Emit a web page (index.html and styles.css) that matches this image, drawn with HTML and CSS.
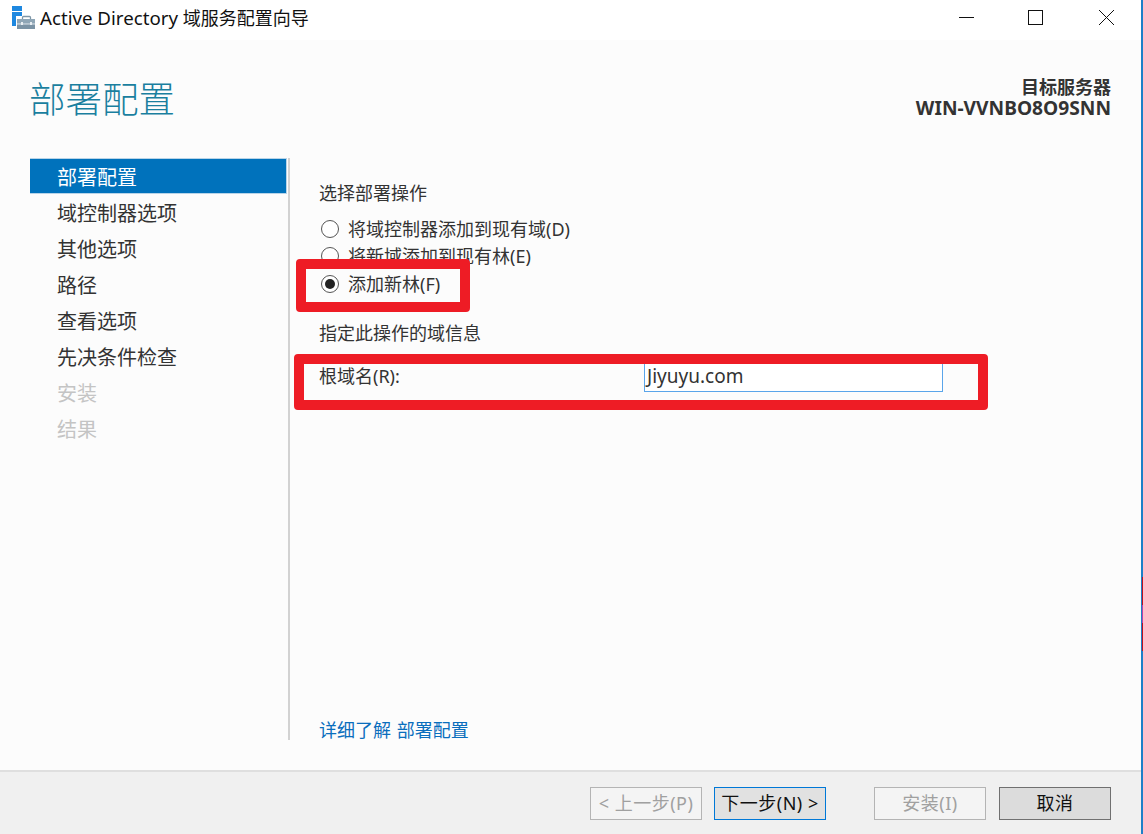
FILE: index.html
```html
<!DOCTYPE html>
<html lang="zh-CN">
<head>
<meta charset="utf-8">
<title>Active Directory 域服务配置向导</title>
<link rel="stylesheet" href="styles.css">
</head>
<body>
<div class="window">
  <header class="titlebar">
    <svg class="app-icon" width="23" height="23" viewBox="0 0 23 23">
      <rect x="0" y="0" width="10" height="5" fill="#1e88e0"/>
      <rect x="0" y="6" width="10" height="4" fill="#1e88e0"/>
      <rect x="0" y="10" width="4" height="10" fill="#1e88e0"/>
      <path d="M10.500 14v-2.500a1 1 0 0 1 1-1h6a1 1 0 0 1 1 1V14" fill="none" stroke="#7f97a8" stroke-width="1.300"/>
      <rect x="5" y="13" width="19" height="5" fill="#8fa6b6"/>
      <rect x="5" y="18" width="19" height="5" fill="#7b93a5"/>
      <rect x="5" y="17.500" width="19" height="1" fill="#dfe6eb"/>
      <rect x="9" y="16" width="2" height="3" fill="#e8eef2"/>
      <rect x="18" y="16" width="2" height="3" fill="#e8eef2"/>
    </svg>
    <span class="app-title">Active Directory <span class="cjk">域服务配置向导</span></span>
    <div class="window-controls">
      <svg width="15" height="15" viewBox="0 0 15 15"><path d="M0 7.500h15" stroke="#111" fill="none"/></svg>
      <svg class="max-icon" width="15" height="15" viewBox="0 0 15 15"><rect x=".5" y=".5" width="14" height="14" stroke="#111" fill="none"/></svg>
      <svg width="15" height="15" viewBox="0 0 15 15"><path d="M0 0l15 15M15 0L0 15" stroke="#111" fill="none"/></svg>
    </div>
  </header>

  <main class="content">
    <div class="page-head">
      <h1 class="page-title">部署配置</h1>
      <div class="server">
        <div class="server-role">目标服务器</div>
        <div class="server-name">WIN-VVNBO8O9SNN</div>
      </div>
    </div>
    <div class="panes">
      <nav class="nav">
        <div class="nav-item active">部署配置</div>
        <div class="nav-item">域控制器选项</div>
        <div class="nav-item">其他选项</div>
        <div class="nav-item">路径</div>
        <div class="nav-item">查看选项</div>
        <div class="nav-item">先决条件检查</div>
        <div class="nav-item disabled">安装</div>
        <div class="nav-item disabled">结果</div>
      </nav>
      <section class="form">
        <div class="form-main">
          <div class="label section-label">选择部署操作</div>
          <div class="radios">
            <div class="radio-row"><span class="radio"></span>将域控制器添加到现有域(D)</div>
            <div class="radio-row"><span class="radio"></span>将新域添加到现有林(E)</div>
            <div class="radio-row"><span class="radio checked"></span>添加新林(F)</div>
          </div>
          <div class="label info-label">指定此操作的域信息</div>
          <div class="root-row">
            <span class="root-label">根域名(R):</span>
            <div class="input">Jiyuyu.com</div>
          </div>
        </div>
        <a class="link">详细了解 部署配置</a>
      </section>
    </div>
  </main>

  <footer class="footer">
    <div class="btn is-disabled">&lt; 上一步(P)</div>
    <div class="btn is-focus">下一步(N) &gt;</div>
    <div class="btn is-disabled btn-install">安装(I)</div>
    <div class="btn is-default">取消</div>
  </footer>

  <div class="mark mark-forest"></div>
  <div class="mark mark-domain"></div>
  <div class="edge"><div class="edge-red"></div></div>
</div>
</body>
</html>
```
FILE: styles.css
```css
* { box-sizing: border-box; }
html, body { margin: 0; padding: 0; }
body {
  font-family: "Noto Sans", "Noto Sans CJK SC", sans-serif;
  color: #333;
  background: #fff;
  overflow: hidden;
}
.window {
  position: relative;
  width: 1143px;
  height: 834px;
  display: flex;
  flex-direction: column;
  overflow: hidden;
}
.titlebar {
  height: 40px;
  flex: none;
  background: #fff;
  display: flex;
  align-items: flex-start;
  padding: 6px 0 0 12px;
  color: #111;
}
.app-icon { flex: none; }
.app-title {
  margin-left: 5px;
  font-size: 18.700px;
  line-height: 24px;
}
.app-title .cjk { font-size: 18px; }
.window-controls {
  margin-left: auto;
  margin-right: 29px;
  margin-top: 4px;
  display: flex;
  gap: 55px;
}
.max-icon { position: relative; left: -1px; }
.content {
  flex: 1;
  background: #fcfcfc;
  display: flex;
  flex-direction: column;
  min-height: 0;
}
.page-head {
  height: 118px;
  flex: none;
  display: flex;
  justify-content: space-between;
  padding: 32px 32px 0 29px;
}
.page-title {
  margin: 0;
  font-size: 36.500px;
  line-height: 54px;
  font-weight: 300;
  color: #1a7f9f;
}
.server {
  margin-top: 5px;
  text-align: right;
  font-size: 18px;
  font-weight: 700;
  color: #333;
}
.server-role { line-height: 20px; }
.server-name { font-size: 19.200px; line-height: 22px; }
.panes {
  flex: none;
  height: 582px;
  display: flex;
}
.nav {
  width: 260px;
  margin-left: 30px;
  border-right: 2px solid #d2d2d2;
}
.nav-item {
  height: 36px;
  margin-right: 1px;
  padding: 2px 0 0 27px;
  font-size: 20px;
  line-height: 36px;
  color: #333;
}
.nav-item.active {
  background: #0072bc;
  color: #fff;
  border: 1px solid #b8d4e8;
  border-width: 1px 1px 1px 0;
  padding-top: 1px;
  line-height: 36px;
}
.nav-item.disabled { color: #c4c4c4; }
.form {
  flex: 1;
  padding-left: 29px;
  padding-right: 32px;
  display: flex;
  flex-direction: column;
  font-size: 18px;
  color: #333;
}
.form-main { flex: 1; }
.label { line-height: 24px; }
.section-label { margin-top: 23px; }
.radios { margin-top: 10px; }
.radio-row {
  height: 27.500px;
  display: flex;
  align-items: center;
  line-height: 24px;
}
.radio {
  width: 18px;
  height: 18px;
  margin: 0 9px 0 2px;
  border: 1.500px solid #555;
  border-radius: 50%;
  background: #fff;
  display: flex;
  align-items: center;
  justify-content: center;
  flex: none;
}
.radio.checked::after {
  content: "";
  width: 10px;
  height: 10px;
  border-radius: 50%;
  background: #222;
}
.info-label { margin-top: 23.500px; }
.root-row {
  margin-top: 10.500px;
  height: 36px;
  position: relative;
  display: flex;
  align-items: flex-start;
}
.root-label { line-height: 28px; margin-top: 6px; }
.input {
  position: absolute;
  left: 325px;
  top: 3px;
  width: 299px;
  height: 33px;
  background: #fff;
  border: 1px solid #5aa5ea;
  padding: 1px 0 0 2px;
  line-height: 31px;
  font-size: 19px;
  color: #333;
}
.link {
  display: block;
  margin-bottom: -2px;
  height: 24px;
  line-height: 24px;
  word-spacing: 1px;
  color: #0a6ebd;
}
.footer {
  flex: none;
  height: 64px;
  background: #f0f0f0;
  border-top: 2px solid #dfdfdf;
  display: flex;
  padding: 15px 0 0 590px;
  gap: 12px;
}
.btn {
  width: 112px;
  height: 33px;
  font-size: 18px;
  letter-spacing: .5px;
  line-height: 31px;
  text-align: center;
  border: 1px solid #adadad;
  background: #e1e1e1;
  color: #111;
}
.btn.is-disabled { background: #f4f4f4; color: #a0a0a0; border-color: #b4b4b4; }
.btn.is-focus { background: #e1e1e1; border: 1px solid #0078d7; }
.btn.is-default { background: #dcdcdc; border-color: #707070; margin-left: 1px; }
.btn-install { margin-left: 36px; }
.mark {
  position: absolute;
  border: 10px solid #ee1c25;
  border-radius: 4px;
}
.mark-forest { left: 296px; top: 259px; width: 174px; height: 53px; }
.mark-domain { left: 294px; top: 354px; width: 694px; height: 56px; }
.edge {
  position: absolute;
  right: 0;
  top: 0;
  bottom: 0;
  width: 2px;
  background: #1e7fc8;
}
.edge-red {
  position: absolute;
  left: 1px;
  top: 577px;
  width: 1px;
  height: 74px;
  background: linear-gradient(#c01020 0 38%, #c040a0 38% 62%, #c01020 62%);
}
```
